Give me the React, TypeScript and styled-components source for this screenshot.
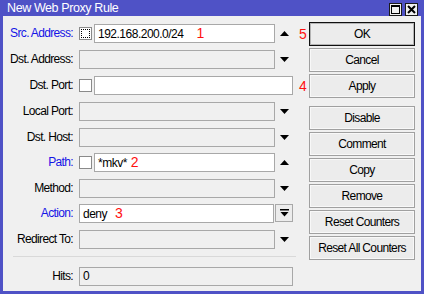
import React from "react";
import styled, { createGlobalStyle } from "styled-components";

const Global = createGlobalStyle`
  html, body { margin: 0; padding: 0; background: #f0f0f0; }
  body {
    font-family: "Liberation Sans", Arial, sans-serif;
    font-size: 12px;
    letter-spacing: -0.65px;
  }
`;

const Window = styled.div`
  width: 424px;
  height: 294px;
  box-sizing: border-box;
  background: #4f52c6;
  padding: 0 3px 3px 3px;
  display: flex;
  flex-direction: column;
`;

const TitleBar = styled.div`
  height: 23px;
  display: flex;
  align-items: center;
  justify-content: space-between;
  padding: 0 3px 0 4px;
`;

const Title = styled.div`
  color: #fff;
  font-size: 12.5px;
  letter-spacing: -0.4px;
`;

const TitleButtons = styled.div`
  display: flex;
  gap: 3px;
  margin-top: 2px;
`;

const TitleBtn = styled.div`
  width: 13px;
  height: 13px;
  box-sizing: border-box;
  background: #f0f0f0;
  border: 1px solid #1a1a1a;
  display: flex;
  align-items: center;
  justify-content: center;
`;

const Body = styled.div`
  flex: 1;
  background: #f0f0f0;
  display: flex;
  padding-top: 6px;
`;

const Form = styled.div`
  width: 306px;
  display: flex;
  flex-direction: column;
`;

const Row = styled.div<{ $h?: number }>`
  height: ${(p) => p.$h ?? 26}px;
  display: flex;
  align-items: flex-start;
  padding-top: 2px;
  box-sizing: border-box;
`;

const Label = styled.div<{ $blue?: boolean }>`
  width: 70px;
  margin-right: 6px;
  text-align: right;
  line-height: 19px;
  color: ${(p) => (p.$blue ? "#1414e6" : "#000")};
  white-space: nowrap;
`;

const Check = styled.div<{ $focus?: boolean }>`
  width: 13px;
  height: 13px;
  box-sizing: border-box;
  margin-top: 3px;
  margin-right: 2px;
  background: #fff;
  border: 1px solid #8a8a8a;
  position: relative;
  &::after {
    content: "";
    display: ${(p) => (p.$focus ? "block" : "none")};
    position: absolute;
    inset: 1px;
    border: 1px dotted #000;
  }
`;

const Field = styled.div<{ $disabled?: boolean; $gap?: number }>`
  flex: 1;
  height: 19px;
  box-sizing: border-box;
  border: 1px solid #a8a8a8;
  background: ${(p) => (p.$disabled ? "#f0f0f0" : "#fff")};
  margin-right: ${(p) => p.$gap ?? 0}px;
  padding-left: 3px;
  line-height: 17px;
  color: #000;
  letter-spacing: -0.5px;
  white-space: nowrap;
  overflow: hidden;
`;

const Mark = styled.span<{ $left?: number }>`
  color: #ff1010;
  font-size: 14px;
  letter-spacing: 0;
  margin-left: ${(p) => p.$left ?? 6}px;
`;

const ArrowCell = styled.div`
  width: 18px;
  height: 19px;
  display: flex;
  align-items: center;
  justify-content: center;
`;

const SmallBtn = styled.div`
  width: 18px;
  height: 18px;
  box-sizing: border-box;
  border: 1px solid #a8a8a8;
  background: #ececec;
  display: flex;
  align-items: center;
  justify-content: center;
`;

const NoteCell = styled.div`
  width: 16px;
  padding-left: 6px;
  box-sizing: border-box;
  color: #ff1010;
  font-size: 14px;
  letter-spacing: 0;
  line-height: 19px;
  margin-top: 1px;
`;

const Separator = styled.div`
  height: 1px;
  background: #d9d9d9;
  margin: 2px 13px 8px 10px;
`;

const ButtonCol = styled.div`
  width: 106px;
  display: flex;
  flex-direction: column;
  gap: 2px;
`;

const Button = styled.div<{ $default?: boolean; $space?: number }>`
  height: 24px;
  box-sizing: border-box;
  border: 1px solid ${(p) => (p.$default ? "#101010" : "#a0a0a0")};
  box-shadow: ${(p) => (p.$default ? "inset 0 0 0 1px #b4b4b4" : "inset 0 0 0 1px #f8f8f8")};
  background: #ececec;
  display: flex;
  align-items: center;
  justify-content: center;
  color: #000;
  margin-top: ${(p) => p.$space ?? 0}px;
`;

const Arrow = ({ up }: { up?: boolean }) => (
  <svg width="9" height="5" viewBox="0 0 9 5">
    {up ? <polygon points="0,5 9,5 4.5,0" fill="#000" /> : <polygon points="0,0 9,0 4.5,5" fill="#000" />}
  </svg>
);

const DropIcon = () => (
  <svg width="9" height="8" viewBox="0 0 9 8">
    <rect x="0" y="0" width="9" height="1.5" fill="#000" />
    <polygon points="0.5,3 8.5,3 4.5,7.5" fill="#000" />
  </svg>
);

export default function App() {
  return (
    <>
      <Global />
      <Window>
        <TitleBar>
          <Title>New Web Proxy Rule</Title>
          <TitleButtons>
            <TitleBtn>
              <svg width="9" height="9" viewBox="0 0 9 9">
                <rect x="0.5" y="0.5" width="8" height="8" fill="none" stroke="#000" />
                <rect x="0" y="0" width="9" height="2" fill="#000" />
              </svg>
            </TitleBtn>
            <TitleBtn>
              <svg width="9" height="9" viewBox="0 0 9 9">
                <path d="M1 1 L8 8 M8 1 L1 8" stroke="#000" strokeWidth="2" />
              </svg>
            </TitleBtn>
          </TitleButtons>
        </TitleBar>
        <Body>
          <Form>
            <Row>
              <Label $blue>Src. Address:</Label>
              <Check $focus />
              <Field>
                192.168.200.0/24<Mark $left={13}>1</Mark>
              </Field>
              <ArrowCell><Arrow up /></ArrowCell>
              <NoteCell>5</NoteCell>
            </Row>
            <Row>
              <Label>Dst. Address:</Label>
              <Field $disabled />
              <ArrowCell><Arrow /></ArrowCell>
              <NoteCell />
            </Row>
            <Row>
              <Label>Dst. Port:</Label>
              <Check />
              <Field />
              <NoteCell>4</NoteCell>
            </Row>
            <Row>
              <Label>Local Port:</Label>
              <Field $disabled />
              <ArrowCell><Arrow /></ArrowCell>
              <NoteCell />
            </Row>
            <Row $h={25}>
              <Label>Dst. Host:</Label>
              <Field $disabled />
              <ArrowCell><Arrow /></ArrowCell>
              <NoteCell />
            </Row>
            <Row>
              <Label $blue>Path:</Label>
              <Check />
              <Field>
                *mkv*<Mark $left={4}>2</Mark>
              </Field>
              <ArrowCell><Arrow up /></ArrowCell>
              <NoteCell />
            </Row>
            <Row $h={25}>
              <Label>Method:</Label>
              <Field $disabled />
              <ArrowCell><Arrow /></ArrowCell>
              <NoteCell />
            </Row>
            <Row>
              <Label $blue>Action:</Label>
              <Field $gap={1}>
                deny<Mark $left={8}>3</Mark>
              </Field>
              <SmallBtn><DropIcon /></SmallBtn>
              <NoteCell />
            </Row>
            <Row>
              <Label>Redirect To:</Label>
              <Field $disabled />
              <ArrowCell><Arrow /></ArrowCell>
              <NoteCell />
            </Row>
            <Separator />
            <Row>
              <Label>Hits:</Label>
              <Field $disabled>0</Field>
              <NoteCell />
            </Row>
          </Form>
          <ButtonCol>
            <Button $default>OK</Button>
            <Button>Cancel</Button>
            <Button>Apply</Button>
            <Button $space={6}>Disable</Button>
            <Button>Comment</Button>
            <Button>Copy</Button>
            <Button>Remove</Button>
            <Button>Reset Counters</Button>
            <Button>Reset All Counters</Button>
          </ButtonCol>
        </Body>
      </Window>
    </>
  );
}
